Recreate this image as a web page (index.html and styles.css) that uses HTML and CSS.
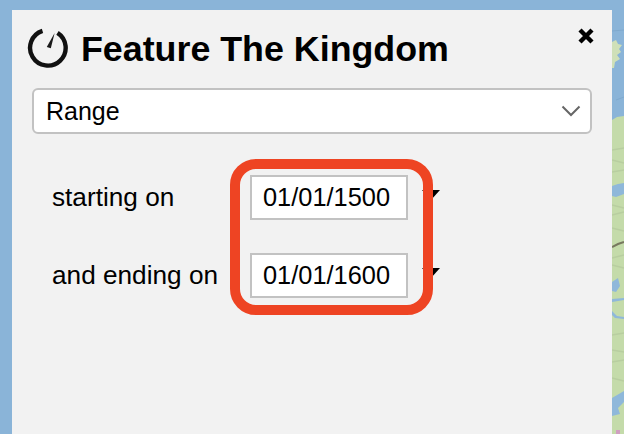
FILE: index.html
```html
<!DOCTYPE html>
<html lang="en">
<head>
    <meta charset="UTF-8">
    <meta name="viewport" content="width=device-width, initial-scale=1.0">
    <title>Feature The Kingdom</title>
    <link rel="stylesheet" href="styles.css">
</head>
<body>

<div class="page">
    <div class="panel">
        <div class="panel-header">
            <svg class="clock-icon" width="42" height="42" viewBox="0 0 42 42">
                <path d="M15.5 3.8 A17.8 17.8 0 1 0 30.5 5.8" fill="none" stroke="#111" stroke-width="4.4"/>
                <path d="M19.8 20 L23.8 21.2 L27.6 6 Z" fill="#1a1a1a"/>
            </svg>
            <h1>Feature The Kingdom</h1>
            <svg class="close-btn" width="18" height="18" viewBox="0 0 18 18">
                <path d="M3 3 L15 15 M15 3 L3 15" fill="none" stroke="#000" stroke-width="4.4"/>
            </svg>
        </div>

        <div class="range-select">
            <span>Range</span>
            <svg width="20" height="12" viewBox="0 0 20 12">
                <path d="M1.5 1.5 L10 10 L18.5 1.5" fill="none" stroke="#666" stroke-width="2"/>
            </svg>
        </div>

        <div class="date-rows">
            <div class="date-row">
                <label>starting on</label>
                <div class="date-input">01/01/1500</div>
                <span class="date-arrow"></span>
            </div>
            <div class="date-row">
                <label>and ending on</label>
                <div class="date-input">01/01/1600</div>
                <span class="date-arrow"></span>
            </div>
            <div class="highlight"></div>
        </div>
    </div>

    <!-- strip of the map behind the panel -->
    <svg class="map-strip" width="12" height="434" viewBox="0 0 12 434">
        <rect width="12" height="434" fill="#8ab4d8"/>
        <path d="M0 31 L12 30 M4 100 L12 97" fill="none" stroke="#7fa9cd" stroke-width="1"/>
        <path d="M0 42 L4 40 L6 44 L10 45 L7 49 L9 52 L5 55 L8 59 L3 62 L2 68 L0 68 Z" fill="#cfe0b8"/>
        <path d="M0 120 L5 117 L12 116 V434 H0 Z" fill="#c4dbaa"/>
        <path d="M0 150 L12 148 M0 160 L12 163 M0 172 L12 170 M0 205 L12 208 M0 215 L12 212 M0 228 L12 231 M0 258 L12 255 M0 265 L12 268 M0 335 L12 333 M0 350 L12 352 M0 362 L12 360 M0 378 L12 381" fill="none" stroke="#b8cea0" stroke-width="1.5"/>
        <path d="M0 186 L6 184 L12 183 V194 L4 197 L0 196 Z" fill="#8fb8da"/>
        <path d="M0 247 L6 244 L12 242" fill="none" stroke="#77785f" stroke-width="2"/>
        <path d="M0 282 L6 278 L8 286 L4 292 L0 291 Z" fill="#8fb8da"/>
        <path d="M0 299 L12 298 V300 L0 302 Z" fill="#8fb8da"/>
        <path d="M0 311 L5 316 L12 317 V319 L3 318 L0 315 Z" fill="#8fb8da"/>
        <path d="M0 398 L12 391 V402 L6 408 L8 414 L0 416 Z" fill="#8fb8da"/>
        <rect x="4" y="430" width="4" height="4" fill="#cf9fc0"/>
    </svg>
</div>

</body>
</html>
```

FILE: styles.css
```css
body {
    margin: 0;
    font-family: "Liberation Sans", Arial, sans-serif;
    background-color: #8ab4d8;
    color: #000;
}
.page {
    display: flex;
    width: 624px;
    height: 434px;
    overflow: hidden;
    box-sizing: border-box;
    padding-left: 12px;
}
.panel {
    width: 600px;
    height: 424px;
    margin-top: 10px;
    padding: 17px 20px 0 20px;
    box-sizing: border-box;
    background-color: #f2f2f2;
}
.map-strip {
    flex: none;
    display: block;
}
.panel-header {
    display: flex;
    align-items: center;
    height: 42px;
}
.clock-icon {
    flex: none;
    margin-left: -5px;
}
.panel-header h1 {
    margin: 1px 0 0 12px;
    font-size: 35.8px;
    font-weight: bold;
    line-height: 42px;
    white-space: nowrap;
}
.close-btn {
    flex: none;
    margin-left: auto;
    margin-top: -24px;
    margin-right: -3px;
}
.range-select {
    display: flex;
    align-items: center;
    justify-content: space-between;
    height: 46px;
    margin-top: 19px;
    padding: 0 9px 0 12px;
    box-sizing: border-box;
    background-color: white;
    border: 2px solid #c2c2c2;
    border-radius: 6px;
    font-size: 25px;
}
.date-rows {
    position: relative;
    margin-top: 41px;
    padding-left: 20px;
}
.date-row {
    display: flex;
    align-items: center;
    height: 45px;
    margin-bottom: 33px;
    font-size: 26.2px;
}
.date-row label {
    width: 198px;
    flex: none;
}
.date-input {
    flex: none;
    width: 158px;
    height: 45px;
    line-height: 41px;
    padding-left: 11px;
    box-sizing: border-box;
    background-color: white;
    border: 2px solid #c2c2c2;
    font-size: 25.4px;
}
.date-arrow {
    width: 0;
    height: 0;
    margin: -5px 0 0 14px;
    border-top: 10px solid #000;
    border-left: 9px solid transparent;
    border-right: 9px solid transparent;
}
.highlight {
    position: absolute;
    left: 198px;
    top: -16px;
    width: 203px;
    height: 156px;
    box-sizing: border-box;
    border: 10px solid #ee4423;
    border-radius: 26px;
}
```
